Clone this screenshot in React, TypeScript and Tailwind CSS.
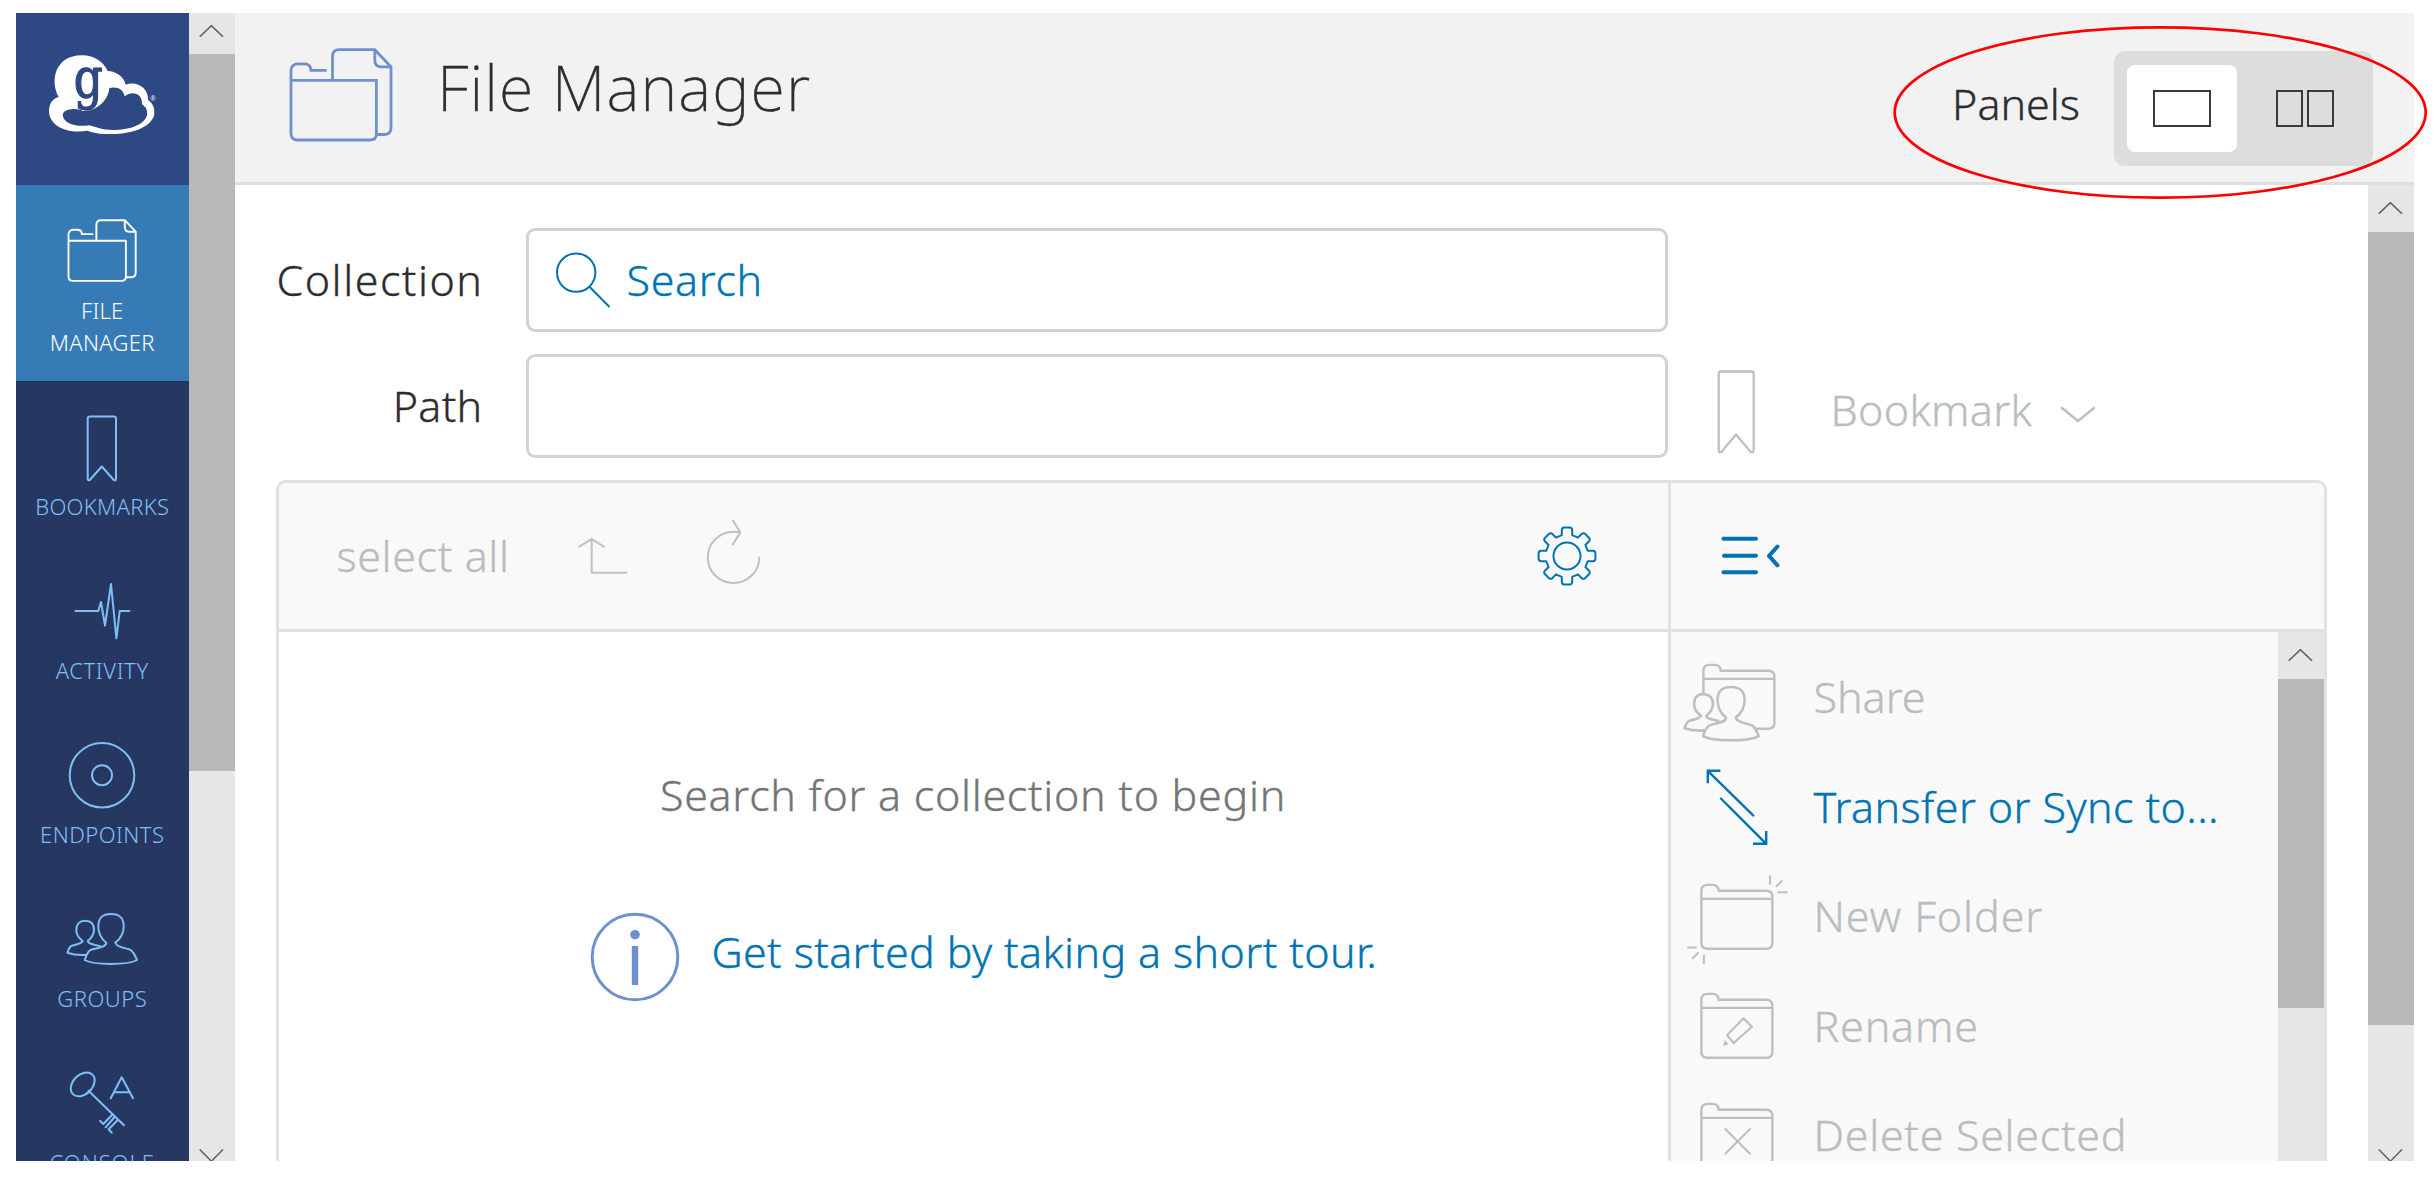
import type { ReactNode } from 'react';

const FOLDER_DOCS =
  'M291 80.3V70.5A6.5 6.5 0 0 1 297.5 63.9H304.5Q310.5 63.9 311 70.4H326.7M291 80.3H376.4V134Q376.4 140 370 140H297.5Q291 140 291 133.5ZM332.5 80.3V56.5Q332.5 49.7 339.5 49.7H374.8L391 66.8V127.5Q391 134.5 384.5 134.5H376.8M374.8 49.7V60Q374.8 66.8 381 66.8H391';

const SMALL_PERSON =
  'M84 73C77 71.5 72 70.5 71.7 68C75.5 65 78 61 78 57C78 51 74.5 47.7 69 47.7C63.5 47.7 60.3 51 60.3 57C60.3 61 62.5 65 66.7 68C66 71 60 71 54.7 73.2C52.8 75 52 78 51.3 79.7C57 81.7 64 82.3 71.3 81.7';

const BIG_PERSON =
  'M90.3 69.7C85 66 82.3 59 82.3 53.7C82.3 45 86 41 95 41C104 41 107.7 45 107.7 53.7C107.7 59 105 66 99.3 69.7C101 75 110 74.5 115 77.2C118.5 80 119.5 84 121 87C112 92.3 78 92.3 68.7 87C70 83 71 80 74 77.2C80 74.5 90 75 90.3 69.7Z';

const FOLDER =
  'M30.4 81.8V30Q30.4 23.9 36.5 23.9H41.5Q47.3 23.9 47.7 29.8H95Q101.4 29.8 101.4 36V81.8Q101.4 87.8 95.4 87.8H36.4Q30.4 87.8 30.4 81.8ZM30.4 37.9H101.4';

function gearOutline() {
  const parts: string[] = [];
  const tooth: [number, number][] = [
    [-5.2, -20.8], [-5.2, -25.8], [-5.2, -28.4], [-2.6, -28.4], [2.6, -28.4], [5.2, -28.4], [5.2, -25.8], [5.2, -20.8],
  ];
  for (let k = 0; k < 8; k++) {
    const a = (k * Math.PI) / 4;
    const p = tooth.map(([x, y]) =>
      `${(x * Math.cos(a) - y * Math.sin(a)).toFixed(2)} ${(x * Math.sin(a) + y * Math.cos(a)).toFixed(2)}`,
    );
    parts.push(`${k ? 'L' : 'M'}${p[0]}L${p[1]}Q${p[2]} ${p[3]}L${p[4]}Q${p[5]} ${p[6]}L${p[7]}`);
  }
  return parts.join('') + 'Z';
}
const GEAR = gearOutline();

function Chevron({ down = false, className }: { down?: boolean; className: string }) {
  return (
    <svg className={className} width="46" height="12" viewBox="0 0 46 12" fill="none" stroke="#5f5f5f" strokeWidth="1.5">
      <path d={down ? 'M10.7 .5L22.4 12.2L34 .5' : 'M10.7 11.8L22.4 .6L34 11.8'} />
    </svg>
  );
}

function Scrollbar({ button, thumb, end }: { button: string; thumb: string; end?: boolean }) {
  return (
    <div className="flex h-full w-[46px] shrink-0 flex-col overflow-hidden bg-[#e6e6e6]">
      <div className={`flex shrink-0 ${button}`}>
        <Chevron className="shrink-0" />
      </div>
      <div className={`w-full shrink-0 bg-[#b8b8b8] ${thumb}`} />
      {end && <Chevron down className="mt-auto shrink-0" />}
    </div>
  );
}

function NavItem({ lines, active, icon }: { lines: [string, string][]; active?: boolean; icon: ReactNode }) {
  return (
    <div
      className={`flex shrink-0 flex-col items-center ${
        active ? 'h-[196px] bg-[#367bb5] text-white' : 'h-[164px] text-[#7fbff5]'
      }`}
    >
      <svg className="shrink-0" width="173" height="109" viewBox="0 0 173 109" fill="none" stroke="currentColor" strokeWidth="2" strokeLinejoin="round" strokeLinecap="round">
        {icon}
      </svg>
      {lines.map(([t, c]) => (
        <span key={t} className={`text-[22px] leading-[32px] ${c}`}>{t}</span>
      ))}
    </div>
  );
}

function Action({ label, spacing, active, icon }: { label: string; spacing: string; active?: boolean; icon: ReactNode }) {
  return (
    <div className="flex h-[109.5px] shrink-0 items-center">
      <svg
        className={`shrink-0 ${active ? 'text-[#0074b3]' : 'text-[#bfbfbf]'}`}
        width="143"
        height="109.5"
        viewBox="0 0 143 109.5"
        fill="none"
        stroke="currentColor"
        strokeWidth="2.4"
        strokeLinejoin="round"
      >
        {icon}
      </svg>
      <span className={`mt-[2px] whitespace-nowrap ${spacing} ${active ? 'text-[#0074b3]' : 'text-[#b8bdc1]'}`}>{label}</span>
    </div>
  );
}

function Sidebar() {
  return (
    <nav className="flex h-full w-[172.5px] shrink-0 flex-col overflow-hidden bg-[#263862]">
      <div className="h-[172px] shrink-0 bg-[#2e4884]">
        <svg width="173" height="172" viewBox="48 39 519 516">
          <path
            fill="#fff"
            d="M176 291C150 245 163 166 246 166C285 166 312 188 323 213C347 214 371 228 377 254C411 242 446 265 444 299C458 310 464 322 463 338C462 378 400 403 330 402C300 402 280 399 262 392C200 402 147 378 147 332C147 312 158 295 176 291Z"
          />
          <path
            fill="#2e4884"
            d="M188 345C190 330 215 324 240 329C250 334 275 330 296 318C318 303 327 280 328 264C350 258 371 268 374 289C396 271 428 280 426 313C440 322 443 335 441 345C435 375 385 390 340 390C305 390 290 382 268 376C225 382 190 370 188 345Z"
          />
          <path fill="#fff" d="M246 325C268 331 283 322 285 308L300 300L294 318C280 331 262 334 246 333Z" />
          <text
            transform="translate(221 293) scale(.82 1)"
            fontFamily="DejaVu Serif"
            fontSize="166"
            fill="#2e4884"
            stroke="#2e4884"
            strokeWidth="4"
          >
            g
          </text>
          <text x="451" y="304" fontFamily="Liberation Sans" fontSize="22" fill="#fff">®</text>
        </svg>
      </div>
      <NavItem
        active
        lines={[['FILE', 'tracking-[.2px]'], ['MANAGER', 'tracking-[.3px]']]}
        icon={
          <g transform="translate(52.5 35.2) scale(.672) translate(-291 -49.7)" strokeWidth="2.8">
            <path d={FOLDER_DOCS} />
          </g>
        }
      />
      <NavItem
        lines={[['BOOKMARKS', 'tracking-[.3px]']]}
        icon={<path d="M74 35.5H98Q100 35.5 100 37.5V97.5Q100 100 97.8 99L85.8 85.5L73.8 99Q71.7 100 71.7 97.5V37.5Q71.7 35.5 74 35.5Z" />}
      />
      <NavItem
        lines={[['ACTIVITY', 'tracking-[.6px]']]}
        icon={<path d="M59.5 66H82.3L85 57L89 80.5L95 39L100.4 93.3L103.7 66H113.5" />}
      />
      <NavItem
        lines={[['ENDPOINTS', 'tracking-[.45px]']]}
        icon={
          <>
            <circle cx="86" cy="66.2" r="32.3" />
            <circle cx="86" cy="66.2" r="10" />
          </>
        }
      />
      <NavItem
        lines={[['GROUPS', 'tracking-[.5px]']]}
        icon={
          <>
            <path d={SMALL_PERSON} />
            <path d={BIG_PERSON} fill="#263862" />
          </>
        }
      />
      <NavItem
        lines={[['CONSOLE', 'tracking-[.95px]']]}
        icon={
          <>
            <ellipse cx="66.7" cy="47.4" rx="13.8" ry="9.7" transform="rotate(-45 66.7 47.4)" />
            <path d="M72.5 53.8L108 88.3M96.5 77.5L87.3 87L84 83.7M99 79.5L89.7 90.3M102 82.7L92.7 92.3L95.7 95.7M94.7 61.3L105.7 40.3L117 61.3M98 55.3H114" />
          </>
        }
      />
    </nav>
  );
}

function Header() {
  return (
    <header className="flex h-[172px] shrink-0 items-start border-b-[3px] border-[#dedede] bg-[#f2f2f2] pl-[51.5px] pr-[41px]">
      <svg className="mt-[31px] shrink-0" width="110" height="102" viewBox="286 44 110 102" fill="none" stroke="#6f90cf" strokeWidth="2.8">
        <path d={FOLDER_DOCS} />
      </svg>
      <h1 className="ml-[41px] mt-[34px] text-[63px] font-extralight leading-[80px] tracking-[1.1px]">File Manager</h1>
      <span className="ml-auto mr-[34px] mt-[66px] leading-[50px]">Panels</span>
      <div className="mt-[38px] flex h-[115px] w-[259px] shrink-0 items-center gap-[13px] rounded-[11px] bg-[#dddddd] pl-[12.5px]">
        <div className="flex h-[87px] w-[110px] items-center justify-center rounded-[8px] bg-white">
          <div className="h-[37px] w-[58px] border-2 border-[#3a3a3a]" />
        </div>
        <div className="flex h-[87px] w-[110px] items-center justify-center gap-[4px]">
          <div className="h-[37px] w-[27px] border-2 border-[#3a3a3a]" />
          <div className="h-[37px] w-[27px] border-2 border-[#3a3a3a]" />
        </div>
      </div>
    </header>
  );
}

function Fields() {
  return (
    <div className="flex h-[230px] shrink-0 items-end">
      <div className="flex w-[249px] shrink-0 flex-col gap-[22px] text-right">
        <div className="h-[104px] leading-[103px] tracking-[1.5px]">Collection</div>
        <div className="h-[104px] pr-px leading-[103px] tracking-[.3px]">Path</div>
      </div>
      <div className="ml-[42px] flex w-[1142px] shrink-0 flex-col gap-[22px]">
        <div className="flex h-[104px] items-center rounded-[9px] border-[3px] border-[#ced4da] pl-[27px] text-[#0074b3]">
          <svg width="56" height="58" viewBox="0 0 56 58" fill="none" stroke="currentColor" strokeWidth="2">
            <circle cx="20.2" cy="21.6" r="19.2" />
            <path d="M33.2 35.5L53.5 56" />
          </svg>
          <span className="ml-[15px] mt-px tracking-[.65px]">Search</span>
        </div>
        <div className="h-[104px] rounded-[9px] border-[3px] border-[#ced4da]" />
      </div>
      <div className="flex h-[104px] items-center text-[#b8bdc1]">
        <svg className="ml-[49px] mt-[12px] shrink-0" width="39" height="84" viewBox="0 0 39 84" fill="none" stroke="#bfbfbf" strokeWidth="2.3" strokeLinejoin="round">
          <path d="M4 1.5H34.5Q36.7 1.5 36.7 3.8V80Q36.7 83.5 33.6 81.8L19 64.5L4.6 81.8Q1.7 83.5 1.7 80V3.8Q1.7 1.5 4 1.5Z" />
        </svg>
        <span className="ml-[75px] mt-[8px] tracking-[.35px]">Bookmark</span>
        <svg className="ml-[28px] mt-[16px]" width="35" height="17" viewBox="0 0 35 17" fill="none" stroke="#bfbfbf" strokeWidth="2.6" strokeLinecap="round" strokeLinejoin="round">
          <path d="M2 2L18 15L34 2" />
        </svg>
      </div>
    </div>
  );
}

function FilePanel() {
  return (
    <div className="ml-[41px] mt-[22px] flex w-[2051px] grow flex-col rounded-t-[10px] border-x-[3px] border-t-[3px] border-[#dee2e6]">
      <div className="flex h-[149px] shrink-0 rounded-t-[7px] border-b-[3px] border-[#dee2e6] bg-[#f9f9f9]">
        <div className="flex w-[1389px] shrink-0 items-center pl-[58px]">
          <span className="tracking-[.6px] text-[#b8bdc1]">select all</span>
          <svg className="ml-[68px]" width="52" height="70" viewBox="577 521 52 70" fill="none" stroke="#c0c0c0" strokeWidth="2" strokeLinecap="round" strokeLinejoin="round">
            <path d="M578.2 546.7L590.7 539.2L602.9 546.7M590.7 539.2V572.8H625.4" />
          </svg>
          <svg className="ml-[74px]" width="58" height="74" viewBox="703 519 58 74" fill="none" stroke="#c0c0c0" strokeWidth="2" strokeLinecap="round" strokeLinejoin="round">
            <path d="M758.2 557.4A25.7 25.7 0 1 1 732.5 531.7Q736 531.5 739.3 532.4M732 520.5L739.3 532.4L731.8 544.5" />
          </svg>
          <svg className="ml-auto mr-[69px]" width="64" height="64" viewBox="-32 -32 64 64" fill="none" stroke="#0074b3" strokeWidth="2" strokeLinejoin="round">
            <path d={GEAR} />
            <circle r="13.5" />
          </svg>
        </div>
        <div className="flex grow items-center border-l-[3px] border-[#dee2e6] pl-[50px]">
          <svg width="60" height="44" viewBox="1721 534.5 60 44" fill="none" stroke="#0074b3" strokeWidth="4" strokeLinecap="round" strokeLinejoin="round">
            <path d="M1723.4 539.2H1756M1724 556.3H1756M1723.4 572.8H1756M1777.5 547L1769 556.3L1777.5 565.8" />
          </svg>
        </div>
      </div>
      <div className="flex h-[529px] shrink-0">
        <div className="flex w-[1389px] shrink-0 flex-col">
          <p className="mt-[133px] text-center leading-[60px] tracking-[.7px] text-[#757575]">Search for a collection to begin</p>
          <div className="ml-[311px] mt-[87px] flex items-start text-[#0074b3]">
            <svg width="90" height="90" viewBox="0 0 90 90" fill="none" stroke="#6f90cf" strokeWidth="3">
              <circle cx="45" cy="45" r="42.8" />
              <circle cx="45" cy="22.7" r="4.8" fill="#6f90cf" stroke="none" />
              <path d="M45 34V73" strokeWidth="6.4" />
            </svg>
            <span className="ml-[32px] mt-[10px] leading-[60px] tracking-[.37px]">Get started by taking a short tour.</span>
          </div>
        </div>
        <div className="flex grow border-l-[3px] border-[#dee2e6] bg-[#f9f9f9]">
          <div className="flex grow flex-col pt-[9.5px]">
            <Action
              label="Share"
              spacing="tracking-[0px]"
              icon={
                <>
                  <path d={FOLDER} transform="translate(2 -1)" />
                  <g transform="translate(13.5 45) scale(1.066) translate(-51.3 -41)" fill="#f9f9f9">
                    <path d={SMALL_PERSON} />
                    <path d={BIG_PERSON} />
                  </g>
                </>
              }
            />
            <Action
              active
              label="Transfer or Sync to..."
              spacing="tracking-[.4px]"
              icon={<path strokeLinejoin="miter" d="M36.8 19.8L82.9 65.2M49.4 19.8H36.8V32.2M49.4 47L95.2 92.8M82 92.8H95.2V80" />}
            />
            <Action
              label="New Folder"
              spacing="tracking-[.9px]"
              icon={
                <>
                  <path d={FOLDER} />
                  <path strokeWidth="2" strokeLinecap="round" d="M99 15.3V23M110.8 20L105.6 25.3M107.3 31.2H115.5M17 86.4H24.8M27 92L21.7 97.3M32.9 94.6V102.3" />
                </>
              }
            />
            <Action
              label="Rename"
              spacing="tracking-[.8px]"
              icon={
                <>
                  <path d={FOLDER} />
                  <path d="M72.3 48.4L81 56.7L62.8 73L56 65.2Z" strokeWidth="2.2" />
                  <path d="M53.8 70.3L57.8 74.2L52 76Z" fill="currentColor" stroke="none" />
                </>
              }
            />
            <Action
              label="Delete Selected"
              spacing="tracking-[.7px]"
              icon={
                <>
                  <path d={FOLDER} />
                  <path d="M54.3 49L79 73.8M79 49L54.3 73.8" strokeWidth="2" strokeLinecap="round" />
                </>
              }
            />
          </div>
          <Scrollbar button="h-[46.5px] pt-[17px]" thumb="h-[329px]" />
        </div>
      </div>
    </div>
  );
}

export default function App() {
  return (
    <div className="relative h-[1181px] w-[2433px] overflow-hidden bg-white pl-[16px] pt-[13px] font-['Noto_Sans',sans-serif] text-[43px] font-light text-[#2d2d2d]">
      <div className="flex h-[1148px] w-[2398px] overflow-hidden">
        <Sidebar />
        <Scrollbar button="h-[40.5px] pt-[11.5px]" thumb="h-[717px]" end />
        <div className="flex h-full grow flex-col [-webkit-text-stroke:0.35px]">
          <Header />
          <div className="flex h-[976px] shrink-0">
            <main className="flex h-full w-[2133px] shrink-0 flex-col overflow-hidden pt-[43px]">
              <Fields />
              <FilePanel />
            </main>
            <Scrollbar button="h-[46.5px] pt-[17px]" thumb="h-[793px]" end />
          </div>
        </div>
      </div>
      <svg className="pointer-events-none absolute left-[1890px] top-[22px]" width="540" height="181" viewBox="0 0 540 181" fill="none" stroke="#ff0000" strokeWidth="2.7">
        <ellipse cx="270.2" cy="90.5" rx="265.5" ry="85.2" />
      </svg>
    </div>
  );
}
